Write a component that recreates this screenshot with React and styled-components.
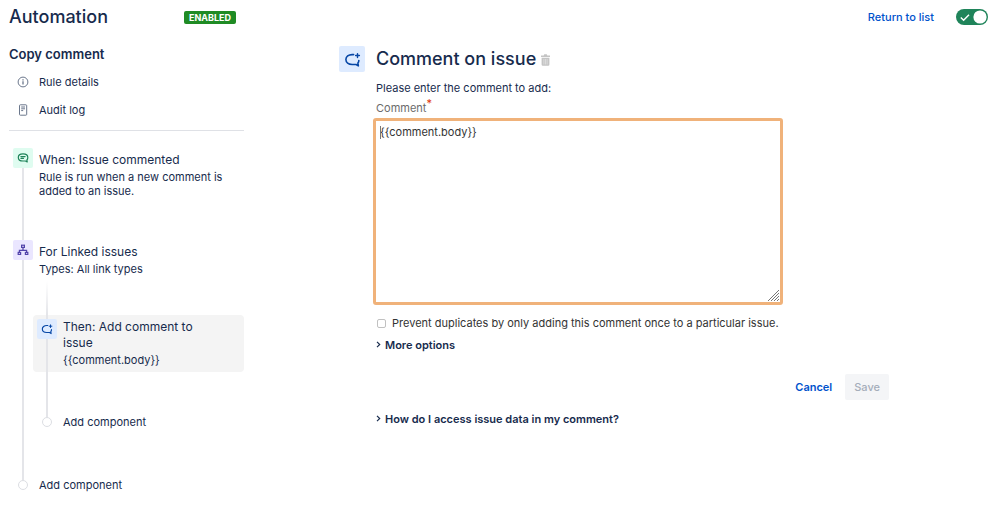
import React, { useState } from 'react';
import styled, { createGlobalStyle } from 'styled-components';

const GlobalStyle = createGlobalStyle`
  * {
    box-sizing: border-box;
  }

  body {
    margin: 0;
    background-color: #ffffff;
    color: #172b4d;
    font-family: Inter, 'Liberation Sans', sans-serif;
    font-size: 11px;
    line-height: 14px;
  }

  h1, h2, h3, p, ul {
    margin: 0;
    padding: 0;
  }

  button, input, textarea {
    font: inherit;
    color: inherit;
  }

  svg {
    display: block;
  }
`;

const Header = styled.header`
  display: flex;
  justify-content: space-between;
  align-items: center;
  height: 34px;
  padding: 0 11px 0 9px;
`;

const Brand = styled.div`
  display: flex;
  justify-content: space-between;
  align-items: center;
  width: 227px;
`;

const PageTitle = styled.h1`
  font-size: 18px;
  line-height: 24px;
  font-weight: 500;
`;

const Lozenge = styled.span`
  background-color: #1f8b24;
  color: #ffffff;
  border-radius: 2px;
  padding: 0 5px;
  font-size: 9px;
  line-height: 13px;
  font-weight: 700;
`;

const HeaderActions = styled.div`
  display: flex;
  align-items: center;
  gap: 22px;
`;

const TextLink = styled.a`
  color: #0052cc;
  font-weight: 500;
  text-decoration: none;
`;

const Switch = styled.label`
  position: relative;
  width: 32px;
  height: 16px;

  svg {
    position: absolute;
    top: 0;
    left: 0;
    pointer-events: none;
  }
`;

const SwitchInput = styled.input`
  appearance: none;
  display: block;
  width: 100%;
  height: 100%;
  margin: 0;
  border-radius: 8px;
  background-color: ${props => (props.checked ? '#1f845a' : '#6b778c')};
  cursor: pointer;
`;

const Layout = styled.div`
  display: flex;
  align-items: flex-start;
`;

const Sidebar = styled.aside`
  width: 244px;
  flex-shrink: 0;
  padding: 12px 0 0 9px;
`;

const RuleName = styled.h2`
  font-size: 13px;
  line-height: 16px;
  font-weight: 600;
`;

const Nav = styled.nav`
  display: flex;
  flex-direction: column;
  gap: 14px;
  padding: 13px 0;
  margin-bottom: 17px;
  border-bottom: 1px solid #dfe1e6;
`;

const NavLink = styled.a`
  display: flex;
  align-items: center;
  gap: 10px;
  padding-left: 8px;
  color: inherit;
  text-decoration: none;
`;

const Steps = styled.ul`
  list-style: none;
  padding-left: 4px;
`;

const NestedSteps = styled.ul`
  list-style: none;
  padding: 5px 0 49px;
`;

const Step = styled.li`
  display: flex;
  border-radius: 4px;
  padding-left: ${props => (props.$nested ? '4px' : '0')};
  background-color: ${props => (props.$selected ? '#f4f4f4' : 'transparent')};
`;

const Rail = styled.div`
  display: flex;
  flex-direction: column;
  align-items: center;
  width: 20px;
  flex-shrink: 0;
`;

const Line = styled.span`
  width: 2px;
  min-height: ${props => props.$length || 0}px;
  flex: ${props => (props.$length ? 'none' : 1)};
  background: ${props => (props.$fade ? 'linear-gradient(#ffffff, #e4e5e9)' : '#e4e5e9')};
`;

const Dot = styled.span`
  width: 10px;
  height: 10px;
  margin-bottom: 4px;
  flex-shrink: 0;
  border: 1px solid #dcdee3;
  border-radius: 50%;
  background-color: #ffffff;
`;

const iconColors = {
  trigger: ['#dffcf0', '#1f845a'],
  branch: ['#eae6ff', '#5243aa'],
  action: ['#deebff', '#0747a6'],
};

const IconTile = styled.span`
  display: flex;
  align-items: center;
  justify-content: center;
  flex-shrink: 0;
  width: ${props => props.$size || 20}px;
  height: ${props => props.$size || 20}px;
  border-radius: 2px;
  background-color: ${props => iconColors[props.$kind][0]};
  color: ${props => iconColors[props.$kind][1]};
`;

const StepBody = styled.div`
  flex: 1;
  min-width: 0;
`;

const StepText = styled.div`
  padding: 4px 20px ${props => props.$bottom || 0}px 6px;
`;

const StepTitle = styled.h3`
  font-size: 12px;
  line-height: 16px;
  font-weight: 400;
`;

const StepInfo = styled.p`
  padding-top: 2px;
`;

const AddButton = styled.button`
  height: 14px;
  margin-top: -2px;
  padding: 0 0 0 6px;
  border: none;
  background: none;
  line-height: 14px;
  cursor: pointer;
`;

const Main = styled.main`
  display: flex;
  align-items: flex-start;
  flex: 1;
  gap: 11px;
  padding: 12px 110px 40px 95px;
`;

const Form = styled.form`
  flex: 1;
  min-width: 0;
`;

const FormHeader = styled.div`
  display: flex;
  align-items: center;
  gap: 5px;
  height: 26px;
  margin-bottom: 9px;
`;

const FormTitle = styled.h2`
  font-size: 18px;
  line-height: 24px;
  font-weight: 500;
`;

const IconButton = styled.button`
  border: none;
  background: none;
  padding: 2px 0 0;
  color: #c4c4c4;
  cursor: pointer;
`;

const FieldLabel = styled.label`
  display: block;
  margin-top: 6px;
  color: #6b6b6b;

  sup {
    color: #de350b;
    font-size: 11px;
    line-height: 0;
  }
`;

const EditorWrap = styled.div`
  position: relative;
  width: 80%;
  margin: 3px 0 11px -3px;

  &::before {
    content: '';
    position: absolute;
    top: 8px;
    left: 7px;
    width: 1px;
    height: 13px;
    background-color: #777777;
  }

  svg {
    position: absolute;
    right: 4px;
    bottom: 4px;
    pointer-events: none;
  }
`;

const Editor = styled.textarea`
  display: block;
  width: 100%;
  height: 187px;
  padding: 4px;
  border: 3px solid #f0b27a;
  border-radius: 3px;
  background-color: #ffffff;
  color: #333333;
  outline: none;
  resize: none;
`;

const CheckRow = styled.label`
  display: flex;
  align-items: center;
  gap: 6px;
  padding-left: 1px;
  color: #333333;
`;

const Checkbox = styled.input`
  appearance: none;
  width: 9px;
  height: 9px;
  margin: 0;
  border: 1px solid #c1c1c1;
  border-radius: 2px;
  background-color: ${props => (props.checked ? '#0052cc' : '#ffffff')};
`;

const Disclosure = styled.button`
  display: flex;
  align-items: center;
  gap: 4px;
  padding: 0;
  margin-top: 8px;
  border: none;
  background: none;
  font-weight: 600;
  cursor: pointer;

  svg {
    margin-bottom: 2px;
  }
`;

const Actions = styled.div`
  display: flex;
  justify-content: flex-end;
  gap: 4px;
  margin: 22px 0 12px;
`;

const Button = styled.button`
  height: 26px;
  padding: 0 9px;
  border: none;
  border-radius: 2px;
  background-color: ${props => (props.disabled ? '#f4f5f7' : 'transparent')};
  color: ${props => (props.disabled ? '#a5adba' : '#0052cc')};
  font-weight: ${props => (props.disabled ? 500 : 600)};
`;

const CommentPlusIcon = ({ size }) => (
  <svg width={size} height={size} viewBox="0 0 18 18" fill="none" stroke="currentColor" strokeWidth="1.7" strokeLinecap="round" strokeLinejoin="round">
    <path d="M10.200 3.800H8.600C4.800 3.800 2 6 2 9.100s2.800 5.200 6.600 5.200h4.200l2.400 1.500-.5-3c.7-.8 1-1.700 1-2.800" />
    <path d="M14.300 2.800v4M12.300 4.800h4" strokeWidth="1.500" />
  </svg>
);

const SpeechIcon = () => (
  <svg width="12" height="12" viewBox="0 0 12 12" fill="none" stroke="currentColor" strokeWidth="1.2" strokeLinecap="round" strokeLinejoin="round">
    <path d="M6 1.800C3.200 1.800 1.300 3.300 1.300 5.400s1.900 3.600 4.700 3.600h2.400l1.800.9-.3-1.900c.6-.7.9-1.600.9-2.600 0-2.100-2-3.600-4.800-3.600z" />
    <path d="M3.900 4.600h4.200M3.900 6.300h2.600" />
  </svg>
);

const TreeIcon = () => (
  <svg width="12" height="12" viewBox="0 0 12 12" fill="none" stroke="currentColor" strokeWidth="1.2">
    <rect x="4.600" y="1.200" width="2.800" height="2.200" />
    <rect x="1.200" y="8.400" width="2.400" height="2" />
    <rect x="8.400" y="8.400" width="2.400" height="2" />
    <path d="M6 3.400v3M2.400 8.200V6.400h7.200v1.800" />
  </svg>
);

const InfoIcon = () => (
  <svg width="12" height="12" viewBox="0 0 12 12" fill="none" stroke="#6b778c">
    <circle cx="6" cy="6" r="4.900" />
    <path d="M6 5.300v3.200M6 3.200v1.200" strokeWidth="1.300" />
  </svg>
);

const LogIcon = () => (
  <svg width="12" height="12" viewBox="0 0 12 12" fill="none" stroke="#6b778c">
    <rect x="2.500" y="0.800" width="7.200" height="10.400" rx="0.800" />
    <path d="M4.200 3h3.800M4.200 4.800h3.800M4.200 6.600h2" />
  </svg>
);

const TrashIcon = () => (
  <svg width="9" height="12" viewBox="0 0 9 12" fill="currentColor">
    <path d="M0 1.500h2.700L3.300.3h2.400l.6 1.200H9V3H0zM.6 3.800h7.800V10.500q0 1.200-1.200 1.200H1.800Q.6 11.700.6 10.500z" />
    <path d="M2.900 5v5.500M4.500 5v5.500M6.100 5v5.500" stroke="#ffffff" strokeWidth="0.400" />
  </svg>
);

const ChevronIcon = () => (
  <svg width="5" height="7" viewBox="0 0 5 7" fill="none" stroke="currentColor" strokeWidth="1.200">
    <path d="M1 .9l2.700 2.600L1 6.100" />
  </svg>
);

const AddStep = ({ nested }) => (
  <Step $nested={nested}>
    <Rail>
      <Dot />
    </Rail>
    <AddButton type="button">Add component</AddButton>
  </Step>
);

const App = () => {
  const [enabled, setEnabled] = useState(true);
  const [prevent, setPrevent] = useState(false);

  return (
    <>
      <GlobalStyle />
      <Header>
        <Brand>
          <PageTitle>Automation</PageTitle>
          <Lozenge>ENABLED</Lozenge>
        </Brand>
        <HeaderActions>
          <TextLink href="#list">Return to list</TextLink>
          <Switch>
            <SwitchInput
              type="checkbox"
              role="switch"
              aria-label="Rule enabled"
              checked={enabled}
              onChange={e => setEnabled(e.target.checked)}
            />
            <svg width="32" height="16" viewBox="0 0 32 16" fill="none">
              <circle cx={enabled ? 24 : 8} cy="8" r="6.600" fill="#ffffff" />
              {enabled && <path d="M4.800 8.600l2.800 2.700 5.400-5.600" stroke="#ffffff" strokeWidth="1.400" />}
            </svg>
          </Switch>
        </HeaderActions>
      </Header>

      <Layout>
        <Sidebar>
          <RuleName>Copy comment</RuleName>
          <Nav>
            <NavLink href="#details">
              <InfoIcon />
              Rule details
            </NavLink>
            <NavLink href="#audit">
              <LogIcon />
              Audit log
            </NavLink>
          </Nav>

          <Steps>
            <Step>
              <Rail>
                <IconTile $kind="trigger"><SpeechIcon /></IconTile>
                <Line />
              </Rail>
              <StepBody>
                <StepText $bottom={42}>
                  <StepTitle>When: Issue commented</StepTitle>
                  <StepInfo>Rule is run when a new comment is added to an issue.</StepInfo>
                </StepText>
              </StepBody>
            </Step>
            <Step>
              <Rail>
                <IconTile $kind="branch"><TreeIcon /></IconTile>
                <Line />
              </Rail>
              <StepBody>
                <StepText>
                  <StepTitle>For Linked issues</StepTitle>
                  <StepInfo>Types: All link types</StepInfo>
                </StepText>
                <NestedSteps>
                  <Step $nested>
                    <Rail><Line $length={34} $fade /></Rail>
                  </Step>
                  <Step $nested $selected>
                    <Rail>
                      <Line $length={4} />
                      <IconTile $kind="action"><CommentPlusIcon size={12} /></IconTile>
                      <Line />
                    </Rail>
                    <StepBody>
                      <StepText $bottom={5}>
                        <StepTitle>Then: Add comment to issue</StepTitle>
                        <StepInfo>{'{{comment.body}}'}</StepInfo>
                      </StepText>
                    </StepBody>
                  </Step>
                  <Step $nested>
                    <Rail><Line $length={45} /></Rail>
                  </Step>
                  <AddStep nested />
                </NestedSteps>
              </StepBody>
            </Step>
            <AddStep />
          </Steps>
        </Sidebar>

        <Main>
          <IconTile $kind="action" $size={26}><CommentPlusIcon size={17} /></IconTile>
          <Form onSubmit={e => e.preventDefault()}>
            <FormHeader>
              <FormTitle>Comment on issue</FormTitle>
              <IconButton type="button" aria-label="Delete"><TrashIcon /></IconButton>
            </FormHeader>
            <p>Please enter the comment to add:</p>
            <FieldLabel htmlFor="comment">Comment<sup>*</sup></FieldLabel>
            <EditorWrap>
              <Editor id="comment" defaultValue="{{comment.body}}" />
              <svg width="11" height="11" viewBox="0 0 11 11" stroke="#777777" strokeWidth="1">
                <path d="M0 11L11 0M3 11l8-8M6 11l5-5M9 11l2-2" />
              </svg>
            </EditorWrap>
            <CheckRow>
              <Checkbox type="checkbox" checked={prevent} onChange={e => setPrevent(e.target.checked)} />
              Prevent duplicates by only adding this comment once to a particular issue.
            </CheckRow>
            <Disclosure type="button" aria-expanded="false">
              <ChevronIcon />
              More options
            </Disclosure>
            <Actions>
              <Button type="button">Cancel</Button>
              <Button type="submit" disabled>Save</Button>
            </Actions>
            <Disclosure type="button" aria-expanded="false">
              <ChevronIcon />
              How do I access issue data in my comment?
            </Disclosure>
          </Form>
        </Main>
      </Layout>
    </>
  );
};

export default App;
